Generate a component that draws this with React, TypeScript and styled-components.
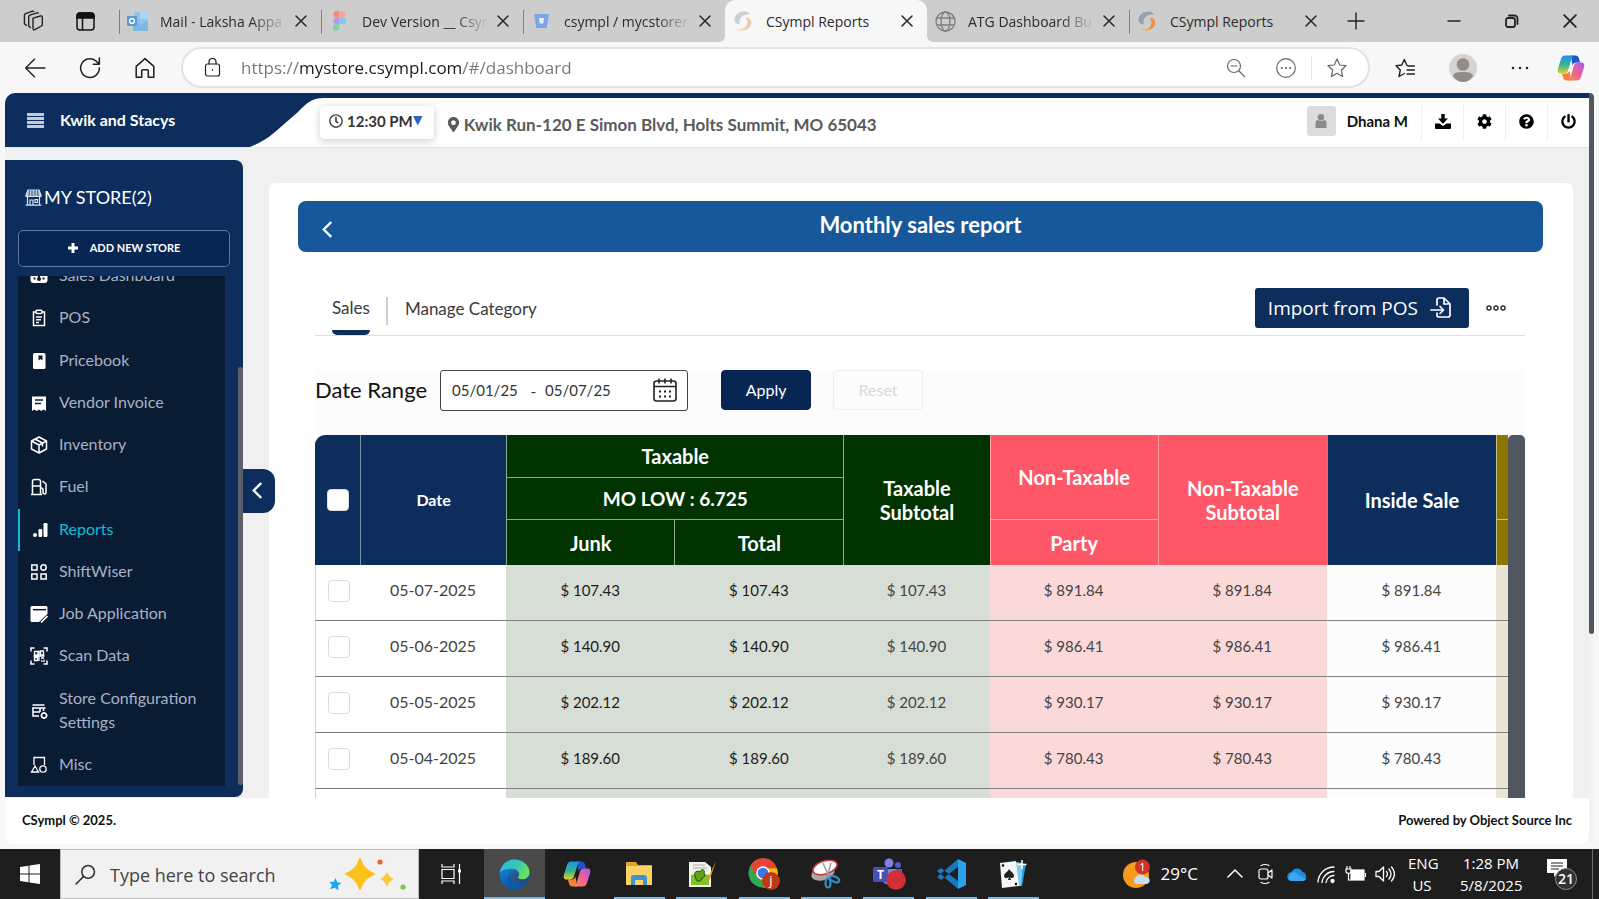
import React, { useState } from "react";
import styled, { createGlobalStyle, css } from "styled-components";
import {
  FaCog,
  FaMapMarkerAlt,
  FaPowerOff,
  FaQuestionCircle,
  FaRegClock,
} from "react-icons/fa";

const ui = `"Open Sans", "Noto Sans", sans-serif`;
const brand = `Lato, "Open Sans", sans-serif`;
const navy = "#0d2d5c";

const GlobalStyle = createGlobalStyle`
  *, *::before, *::after { box-sizing: border-box; }
  html, body { margin: 0; height: 100%; overflow: hidden; }
  body { background: #f7f7f7; font-family: ${brand}; font-size: 16px; color: #222; }
  button, input { font: inherit; color: inherit; margin: 0; }
  button { background: none; border: 0; padding: 0; cursor: pointer; }
  a { color: inherit; text-decoration: none; }
  svg { display: block; flex: none; }
`;

const Screen = styled.div`
  display: flex;
  flex-direction: column;
  height: 100vh;
`;

/* ---------- browser chrome ---------- */

const TabStrip = styled.div`
  display: flex;
  align-items: stretch;
  height: 42px;
  background: #cdcdcd;
  font-family: ${ui};
`;

const StripTools = styled.div`
  display: flex;
  align-items: center;
  gap: 32px;
  width: 119px;
  padding-left: 22px;
`;

const TabItem = styled.div<{ $active?: boolean; $line?: boolean }>`
  position: relative;
  display: flex;
  align-items: center;
  flex: 0 1 202px;
  min-width: 0;
  padding: 0 14px 0 8px;
  font-size: 14px;
  color: #2b2b2b;
  ${(p) =>
    p.$line &&
    css`
      &::before {
        content: "";
        position: absolute;
        left: 0;
        top: 10px;
        width: 1px;
        height: 24px;
        background: #808080;
      }
    `}
  ${(p) =>
    p.$active &&
    css`
      background: #f7f7f7;
      border-radius: 10px 10px 0 0;
      z-index: 1;
      &::before,
      &::after {
        content: "";
        position: absolute;
        bottom: 0;
        width: 6px;
        height: 6px;
      }
      &::before {
        left: -6px;
        background: radial-gradient(circle at 0 0, #cdcdcd 6px, #f7f7f7 6px);
      }
      &::after {
        right: -6px;
        background: radial-gradient(circle at 100% 0, #cdcdcd 6px, #f7f7f7 6px);
      }
    `}
`;

const TabTitle = styled.span<{ $fade?: boolean }>`
  flex: 1;
  min-width: 0;
  margin: 0 8px 0 12px;
  white-space: nowrap;
  ${(p) =>
    p.$fade &&
    css`
      mask-image: linear-gradient(90deg, #000 calc(100% - 36px), transparent);
    `}
`;

const StripEnd = styled.div`
  display: flex;
  align-items: center;
  justify-content: space-between;
  flex: 1;
  padding: 0 22px 0 16px;
`;

const WindowButtons = styled.div`
  display: flex;
  align-items: center;
  gap: 44px;
`;

const Toolbar = styled.div`
  display: flex;
  align-items: center;
  height: 51px;
  padding: 0 14px 0 24px;
  background: #f7f7f7;
  font-family: ${ui};
`;

const NavButtons = styled.div`
  display: flex;
  align-items: center;
  gap: 33px;
  width: 157px;
`;

const AddressBar = styled.div`
  display: flex;
  align-items: center;
  flex: 1;
  height: 41px;
  padding: 0 21px 0 20px;
  border: 2px solid #e2e2e2;
  border-radius: 21px;
  background: #fff;
`;

const UrlInput = styled.input`
  flex: 1;
  min-width: 0;
  margin-left: 18px;
  border: 0;
  outline: 0;
  padding: 0;
  font-size: 17px;
  background: linear-gradient(90deg, #767676 0 59px, #1b1b1b 59px 222px, #767676 222px);
  -webkit-background-clip: text;
  background-clip: text;
  -webkit-text-fill-color: transparent;
`;

const AddressIcons = styled.div`
  display: flex;
  align-items: center;
  gap: 30px;
  color: #666;
`;

const StarSlot = styled.div`
  display: flex;
  align-items: center;
  height: 24px;
  padding-left: 15px;
  margin-left: -15px;
  border-left: 1px solid #e4e4e4;
`;

const ToolbarEnd = styled.div`
  display: flex;
  align-items: center;
  gap: 34px;
  padding-left: 25px;
`;

const CopilotButton = styled.button`
  margin-left: -6px;
`;

/* ---------- page frame ---------- */

const Viewport = styled.div`
  display: flex;
  flex: 1;
  min-height: 0;
  padding: 0 5px 5px;
`;

const Page = styled.div`
  display: flex;
  flex-direction: column;
  flex: 1;
  min-width: 0;
  overflow: hidden;
  border-radius: 10px 0 8px 8px;
  background: #f0f0f0;
`;

const ScrollTrack = styled.div`
  width: 5px;
  background: #f3f3f3;
  border-radius: 0 8px 8px 0;
`;

const ScrollThumb = styled.div`
  height: 72%;
  border-radius: 0 5px 3px 3px;
  background: #515761;
`;

const Header = styled.header`
  display: flex;
  flex: none;
  height: 55px;
  border-top: 5px solid ${navy};
  border-bottom: 1px solid #e2e2e2;
  background: #fff;
`;

const BrandBlock = styled.div`
  display: flex;
  align-items: center;
  gap: 16px;
  width: 319px;
  padding: 0 0 7px 22px;
  background: ${navy};
  clip-path: path("M0 0H319C306 0 301 6 293 14L270 34C260 43 250 47 240 51H0Z");
  color: #fff;
  font-weight: 700;
  font-size: 16px;
`;

const BurgerButton = styled.button`
  padding-top: 2px;
  color: #c5cbd8;
`;

const TimeButton = styled.button`
  display: flex;
  align-items: center;
  align-self: flex-start;
  gap: 4px;
  height: 33px;
  margin: 8px 16px 0 -4px;
  padding: 0 11px 4px 9px;
  border-radius: 4px;
  background: #fff;
  box-shadow: 0 2px 8px rgba(0, 0, 0, 0.2);
  font-weight: 700;
  font-size: 15px;
  color: #333;
`;

const Caret = styled.span`
  width: 10px;
  height: 10px;
  margin-left: -4px;
  background: #2a66b8;
  clip-path: polygon(0 0, 100% 0, 50% 100%);
`;

const Address = styled.div`
  display: flex;
  align-items: center;
  gap: 3px;
  flex: 1;
  margin-left: -4px;
  padding-top: 3px;
  font-weight: 700;
  font-size: 17px;
  color: #5a5a5a;
`;

const UserBlock = styled.div`
  display: flex;
  align-items: center;
  gap: 11px;
  padding: 0 13px 3px 0;
  font-weight: 700;
  font-size: 15px;
  color: #111;
`;

const Avatar = styled.div`
  display: grid;
  place-items: center;
  width: 29px;
  height: 30px;
  border-radius: 3px;
  background: #dcdcdc;
`;

const HeaderAction = styled.button`
  display: grid;
  place-items: center;
  align-self: center;
  width: 42px;
  height: 36px;
  padding-bottom: 3px;
  border-left: 1px solid #efefef;
  color: #000;
`;

const Body = styled.div`
  display: flex;
  flex: 1;
  min-height: 0;
`;

/* ---------- sidebar ---------- */

const Sidebar = styled.aside`
  position: relative;
  display: flex;
  flex-direction: column;
  flex: none;
  width: 238px;
  margin-top: 12px;
  margin-bottom: 1px;
  padding: 24px 13px 11px;
  border-radius: 0 8px 8px 0;
  background: ${navy};
`;

const StoreTitle = styled.h2`
  display: flex;
  align-items: center;
  gap: 2px;
  margin: 0 0 20px;
  padding-left: 7px;
  font-size: 18px;
  line-height: 26px;
  font-weight: 400;
  color: #fff;
`;

const AddStore = styled.button`
  display: flex;
  align-items: center;
  justify-content: center;
  gap: 12px;
  flex: none;
  height: 37px;
  padding-bottom: 2px;
  border: 1px solid #5f7ba5;
  border-radius: 5px;
  background: #072654;
  color: #fff;
  font-size: 11px;
  font-weight: 700;
`;

const MenuClip = styled.nav`
  display: flex;
  flex-direction: column;
  justify-content: flex-end;
  flex: 1;
  min-height: 0;
  margin-top: 9px;
  margin-right: 5px;
  overflow: hidden;
  background: #0a1b34;
`;

const MenuList = styled.ul`
  display: flex;
  flex-direction: column;
  justify-content: space-between;
  flex: none;
  height: 531px;
  margin: 0;
  padding: 0;
  list-style: none;
`;

const MenuLink = styled.a<{ $active?: boolean }>`
  display: flex;
  align-items: center;
  gap: 11px;
  min-height: 42px;
  padding: 8px 20px 10px 12px;
  box-shadow: ${(p) => (p.$active ? "inset 2px 0 0 #12bcd9" : "none")};
  color: ${(p) => (p.$active ? "#12bcd9" : "#a7b3c6")};
  font-size: 16px;
  line-height: 24px;

  svg {
    color: #fff;
    margin-top: 2px;
  }
`;

const SideThumb = styled.div`
  position: absolute;
  right: 0;
  top: 207px;
  bottom: 12px;
  width: 5px;
  border-radius: 2px;
  background: #5a5f69;
`;

const CollapseButton = styled.button`
  position: absolute;
  left: 100%;
  top: 309px;
  z-index: 2;
  display: grid;
  place-items: center;
  width: 32px;
  height: 44px;
  padding: 0 5px 2px 0;
  border-radius: 0 12px 12px 0;
  background: ${navy};
  color: #fff;
`;

/* ---------- report ---------- */

const Panel = styled.main`
  display: flex;
  flex-direction: column;
  flex: 1;
  min-width: 0;
  margin: 35px 16px 0 26px;
  padding: 18px 30px 0 29px;
  overflow: hidden;
  border-radius: 6px 6px 0 0;
  background: #fff;
`;

const Banner = styled.div`
  display: flex;
  align-items: center;
  flex: none;
  height: 51px;
  padding: 0 20px 0 23px;
  border-radius: 8px;
  background: #165899;
  color: #fff;
`;

const BackButton = styled.button`
  padding-top: 5px;
`;

const BannerTitle = styled.h1`
  flex: 1;
  margin: 0;
  padding: 0 15px 4px 0;
  text-align: center;
  font-size: 22px;
  font-weight: 700;
`;

const Section = styled.div`
  display: flex;
  flex-direction: column;
  flex: 1;
  min-height: 0;
  margin: 36px 18px 0 17px;
`;

const TabsRow = styled.div`
  display: flex;
  flex: none;
  height: 48px;
  padding: 0 19px 0 17px;
  border-bottom: 1px solid #dedede;
`;

const ReportTab = styled.button<{ $active?: boolean }>`
  height: 47px;
  padding-bottom: 6px;
  font-size: 17px;
  color: #3a3a3a;
  ${(p) =>
    p.$active &&
    css`
      padding-bottom: 3px;
      border-bottom: 5px solid ${navy};
      border-radius: 0 0 5px 5px;
    `}
`;

const TabDivider = styled.span`
  width: 2px;
  height: 28px;
  margin: 9px 17px 0 16px;
  background: #cfcfcf;
`;

const ImportButton = styled.button`
  display: flex;
  align-items: center;
  gap: 12px;
  height: 40px;
  margin-left: auto;
  padding: 0 17px 0 13px;
  border-radius: 3px;
  background: ${navy};
  color: #fff;
  font-size: 19px;
  font-family: ${ui};
`;

const MoreButton = styled.button`
  align-self: flex-start;
  height: 40px;
  margin-left: 17px;
`;

const Filters = styled.form`
  display: flex;
  align-items: center;
  flex: none;
  height: 65px;
  margin: 34px 0 0;
  padding-bottom: 25px;
  background: #fcfcfc;
`;

const RangeLabel = styled.label`
  margin-right: 13px;
  padding-bottom: 2px;
  font-size: 22px;
  color: #111;
`;

const RangeBox = styled.div`
  display: flex;
  align-items: center;
  width: 248px;
  height: 41px;
  padding: 0 10px 0 11px;
  border: 1px solid #444;
  border-radius: 3px;
  background: #fff;
  color: #333;
`;

const DateInput = styled.input`
  width: 70px;
  padding: 0;
  border: 0;
  outline: 0;
  background: transparent;
  font-size: 15px;
`;

const Dash = styled.span`
  width: 23px;
  text-align: center;
`;

const CalendarButton = styled.button`
  margin-left: auto;
  color: #222;
`;

const FormButton = styled.button<{ $primary?: boolean }>`
  width: 90px;
  height: 40px;
  margin-left: ${(p) => (p.$primary ? "33px" : "22px")};
  padding-bottom: 2px;
  border: 1px solid ${(p) => (p.$primary ? "#072654" : "#ededed")};
  border-radius: 4px;
  background: ${(p) => (p.$primary ? "#072654" : "#fcfcfc")};
  color: ${(p) => (p.$primary ? "#fff" : "#d9d9d9")};
`;

const TableArea = styled.div`
  display: flex;
  flex: 1;
  min-height: 0;
`;

const TableClip = styled.div`
  flex: 1;
  min-width: 0;
  overflow: hidden;
  border-radius: 10px 0 0 0;
`;

const TableThumb = styled.div`
  width: 17px;
  border-radius: 5px 5px 0 0;
  background: #515761;
`;

const Table = styled.table`
  width: 100%;
  table-layout: fixed;
  border-collapse: separate;
  border-spacing: 0;
`;

type Tone = "navy" | "green" | "red" | "gold";
const headTone: Record<Tone, string> = {
  navy,
  green: "#003300",
  red: "#ff5768",
  gold: "#8a7600",
};
const headLine: Record<Tone, string> = {
  navy: "#7f93ad",
  green: "#8fa68f",
  red: "#ffa0a9",
  gold: "#c9bf80",
};

const HeadCell = styled.th<{ $tone: Tone; $top?: boolean; $size?: number }>`
  padding: 0;
  border-left: 1px solid ${(p) => headLine[p.$tone]};
  border-top: ${(p) => (p.$top ? `1px solid ${headLine[p.$tone]}` : "0")};
  background: ${(p) => headTone[p.$tone]};
  color: #fff;
  font-size: ${(p) => p.$size ?? 20}px;
  line-height: 24px;
  font-weight: 700;
  text-align: center;
  vertical-align: middle;

  &:first-child[rowspan="3"] {
    border-left-color: ${(p) => headTone[p.$tone]};
  }
`;

const HeadRow = styled.tr<{ $last?: boolean }>`
  height: ${(p) => (p.$last ? "46px" : "42px")};
`;

const BodyRow = styled.tr`
  height: 56px;
`;

const Cell = styled.td<{ $bg: string; $soft?: boolean; $money?: boolean }>`
  padding: 0 0 6px;
  border-bottom: 1px solid #7d807d;
  background: ${(p) => p.$bg};
  color: ${(p) => (p.$soft ? "#444" : "#1c1c1c")};
  font-size: ${(p) => (p.$money ? "15px" : "16px")};
  text-align: center;

  &:first-child {
    border-left: 1px solid #cfcfcf;
  }
`;

const Check = styled.input<{ $head?: boolean }>`
  appearance: none;
  display: block;
  width: 22px;
  height: 22px;
  margin: ${(p) => (p.$head ? "0 auto" : "2px 0 0 12px")};
  border: 1px solid #dcdcdc;
  border-radius: 4px;
  background: #fff;
`;

const Footer = styled.footer`
  display: flex;
  align-items: center;
  justify-content: space-between;
  flex: none;
  height: 46px;
  padding: 0 17px 2px;
  background: #fff;
  color: #111;
  font-size: 13px;
  font-weight: 700;
`;

/* ---------- taskbar ---------- */

const Taskbar = styled.div`
  display: flex;
  flex: none;
  height: 50px;
  background: #1f1e1f;
  color: #fff;
  font-family: ${ui};
`;

const StartButton = styled.button`
  display: grid;
  place-items: center;
  width: 60px;
`;

const SearchBox = styled.div`
  display: flex;
  align-items: center;
  gap: 14px;
  width: 359px;
  padding: 1px 11px 0 14px;
  border: 1px solid #bdbdbd;
  background: #f1f1f1;
  color: #333;
`;

const SearchInput = styled.input`
  flex: 1;
  min-width: 0;
  border: 0;
  padding: 0;
  outline: 0;
  background: none;
  font-size: 18px;
  &::placeholder {
    color: #444;
    opacity: 1;
  }
`;

const TaskButton = styled.button`
  display: grid;
  place-items: center;
  width: 65px;
`;

const AppList = styled.div`
  display: flex;
  justify-content: space-between;
  width: 560px;
`;

const AppButton = styled.button<{ $open?: boolean; $current?: boolean }>`
  position: relative;
  display: grid;
  place-items: center;
  width: 61px;
  background: ${(p) => (p.$current ? "#4a4a4a" : "none")};
  ${(p) =>
    p.$open &&
    css`
      &::after {
        content: "";
        position: absolute;
        left: ${p.$current ? "0" : "5px"};
        right: ${p.$current ? "0" : "5px"};
        bottom: 0;
        height: 2px;
        background: #76b9ed;
      }
    `}
`;

const Tray = styled.div`
  display: flex;
  align-items: center;
  margin-left: auto;
  padding-right: 6px;
  font-size: 15px;
  line-height: 22px;
  text-align: center;
`;

const Weather = styled.button`
  display: flex;
  align-items: center;
  gap: 10px;
  margin-right: 29px;
  color: #fff;
  font-size: 17px;
`;

const TrayIcons = styled.div`
  display: flex;
  align-items: center;
  gap: 9px;
  margin-right: 13px;
`;

const Stack = styled.div<{ $w: number }>`
  width: ${(p) => p.$w}px;
  margin-right: 24px;
  white-space: nowrap;
`;

const Notice = styled.button`
  padding-right: 14px;
  border-right: 1px solid #6a6a6a;
  height: 50px;
`;

/* ---------- icons ---------- */

type LineProps = { size?: number; w?: number; children: React.ReactNode; box?: number };
const Line = ({ size = 20, w = 1.5, box = 20, children }: LineProps) => (
  <svg width={size} height={size} viewBox={`0 0 ${box} ${box}`} fill="none" stroke="currentColor" strokeWidth={w} strokeLinecap="round" strokeLinejoin="round">
    {children}
  </svg>
);

const CloseIcon = ({ size = 12, w = 1.6 }) => (
  <Line size={size} box={12} w={w}><path d="M1 1l10 10M11 1L1 11" /></Line>
);

const WorkspacesIcon = () => (
  <Line size={22} box={22} w={1.4}>
    <path d="M11 8.200l7.500-2.200q1.800-.4 1.800 1.400v7.200q0 1-.9 1.400l-6.500 3.600q-1.900.8-1.900-1z" />
    <path d="M8.500 17.500l-1-.6q-.8-.5-.8-1.400V6.800q0-1.200 1.200-1.700L15 2.800q.8-.2 1.200.3M4.500 15.300l-1.200-.8q-.9-.6-.9-1.600V5.200q0-1.200 1.200-1.600L10.500 1.200q.9-.2 1.300.3" />
  </Line>
);

const TabActionsIcon = () => (
  <svg width="19" height="19" viewBox="0 0 19 19" fill="none" stroke="#111" strokeWidth="1.5">
    <rect x="1" y="1" width="17" height="17" rx="3" />
    <path d="M1 4a3 3 0 0 1 3-3h11a3 3 0 0 1 3 3v2H1z" fill="#111" />
    <path d="M6.500 6v12" />
  </svg>
);

const OutlookIcon = () => (
  <svg width="21" height="21" viewBox="0 0 21 21">
    <rect x="7" y="1" width="13" height="15" rx="1" fill="#8fc3ea" />
    <path d="M13 1h7v7h-7z" fill="#a9d4f2" />
    <path d="M6 9l8 5 7-5v10a1 1 0 0 1-1 1H7a1 1 0 0 1-1-1z" fill="#7db7e4" />
    <rect x="0" y="5" width="10" height="10" rx="1" fill="#5b9ad4" />
    <circle cx="5" cy="10" r="2.400" fill="none" stroke="#fff" strokeWidth="1.400" />
  </svg>
);

const FigmaIcon = () => (
  <svg width="21" height="20" viewBox="0 0 21 20">
    <path d="M10.500 0H7.800a3.300 3.300 0 0 0 0 6.600h2.700z" fill="#f08c75" />
    <path d="M10.500 0h2.700a3.300 3.300 0 0 1 0 6.600h-2.700z" fill="#f7a397" />
    <path d="M10.500 6.600H7.800a3.300 3.300 0 0 0 0 6.600h2.700z" fill="#b797ee" />
    <circle cx="13.500" cy="9.900" r="3.300" fill="#7fc8f2" />
    <path d="M10.500 13.200H7.800a3.300 3.300 0 1 0 2.700 3.300z" fill="#7bd3a8" />
  </svg>
);

const BucketIcon = () => (
  <svg width="21" height="16" viewBox="0 0 21 16">
    <path d="M3 1h15l-2.300 14H5.300z" fill="#7ea6e6" />
    <path d="M8 5h5l-.8 5.500H8.800z" fill="#e7effb" />
  </svg>
);

const CsymplIcon = ({ faded = false }) => (
  <svg width="21" height="21" viewBox="0 0 21 21" opacity={faded ? 0.45 : 1}>
    <path d="M1.500 9C1.500 4 6 .5 11 .5c3 0 5 1 6 3.500-3-1-6.500 0-8.500 2s-2.500 4-1.500 7.500C4 13 1.500 12 1.500 9z" fill="#93a2ae" />
    <path d="M12.500 6.500c4.500 0 6.500 3 5.500 6.500-1 4.500-5 7-11 6.500 3.500-1 6-2.500 7-5.500 1-2.500.5-5-1.500-7.500z" fill="#ee8f45" />
    <path d="M3 18c5 .5 8-.5 10.500-4-.5 4.500-5 7-10.500 4z" fill="#f7c33c" />
  </svg>
);

const GlobeIcon = () => (
  <svg width="21" height="21" viewBox="0 0 21 21" fill="none" stroke="#7d7d7d" strokeWidth="1.3">
    <circle cx="10.500" cy="10.500" r="9.500" />
    <ellipse cx="10.500" cy="10.500" rx="4.500" ry="9.500" />
    <path d="M2 7h17M2 14h17" />
  </svg>
);

const CopilotIcon = ({ size = 28 }) => (
  <svg width={size} height={size} viewBox="0 0 28 28">
    <defs>
      <linearGradient id="cpa" x1="0" y1="0" x2="0" y2="1">
        <stop offset="0" stopColor="#1b93ec" /><stop offset=".55" stopColor="#3bb68a" /><stop offset="1" stopColor="#e8cf2a" />
      </linearGradient>
      <linearGradient id="cpb" x1="1" y1="0" x2="0" y2="1">
        <stop offset="0" stopColor="#a45cec" /><stop offset=".5" stopColor="#ee6098" /><stop offset="1" stopColor="#f98f4a" />
      </linearGradient>
    </defs>
    <path d="M14 1.500h4.500c2 0 2.800.9 3.300 2.500l1.400 4.500h-3.800c-2 0-3.200.8-3.900 3z" fill="#1a55cf" />
    <path d="M14 26.500H9.500c-2 0-2.800-.9-3.300-2.500l-1.400-4.500h3.800c2 0 3.200-.8 3.900-3z" fill="#f4813c" />
    <path d="M8.500 1.500H17c-1.200.3-1.800 1.300-2.200 2.600L11 16.500c-.8 2.300-2 3-4 3H3.800C1 19.500.2 17.500.9 15L4 5c.8-2.400 2-3.500 4.500-3.500z" fill="url(#cpa)" />
    <path d="M19.500 26.500H11c1.200-.3 1.800-1.300 2.200-2.600L17 11.500c.8-2.300 2-3 4-3h3.200c2.800 0 3.600 2 2.900 4.500L24 23c-.8 2.400-2 3.500-4.500 3.500z" fill="url(#cpb)" />
  </svg>
);

const StoreIcon = () => (
  <svg width="17" height="17" viewBox="0 0 17 17" fill="none" stroke="#dbe3ef" strokeWidth="1.2">
    <path d="M3 1h11l2 5v1.500H1V6z" fill="#b9c6da" />
    <path d="M4.500 1L4 7M7 1v6M10 1v6M12.500 1L13 7" stroke={navy} strokeWidth=".7" />
    <path d="M2.500 8v8M14.500 8v8M.5 16.200h16M5 16v-5h3v5M10 10.500h2.500v3H10z" />
  </svg>
);

const PlusIcon = () => (
  <svg width="10" height="10" viewBox="0 0 10 10" stroke="#fff" strokeWidth="3"><path d="M5 0v10M0 5h10" /></svg>
);

const MenuIcon = ({ name }: { name: string }) => {
  const s = { width: 18, height: 18, viewBox: "0 0 18 18", fill: "none", stroke: "currentColor", strokeWidth: 1.5 } as const;
  switch (name) {
    case "Sales Dashboard":
      return <svg {...s}><rect x=".5" y="2" width="17" height="14" rx="3" fill="#fff" stroke="none" /><path d="M9 13V7M3.500 11.500h2M12.500 11.500h2" stroke="#0a1b34" strokeWidth="2" /><circle cx="9" cy="12" r="2" fill="#0a1b34" stroke="none" /></svg>;
    case "POS":
      return <svg {...s}><path d="M6 3H3.500v13.500h11V3H12" /><rect x="6" y="1.200" width="6" height="3.400" rx="1" /><path d="M6 8h6M6 10.700h5M6 13.400h3" /></svg>;
    case "Pricebook":
      return <svg {...s} stroke="none"><rect x="3" y="1" width="12.500" height="16" rx="1.500" fill="#fff" /><path d="M8.500 3.500h4v5l-2-1.500-2 1.500z" fill="#0a1b34" /></svg>;
    case "Vendor Invoice":
      return <svg {...s} stroke="none"><path d="M2 2.500h14V17l-2.300-1.500L11.300 17 9 15.500 6.700 17l-2.400-1.500L2 17z" fill="#fff" /><path d="M5 6h8M5 9.500h6" stroke="#0a1b34" strokeWidth="1.5" /></svg>;
    case "Inventory":
      return <svg {...s} strokeLinejoin="round"><path d="M9 1l7.500 4v8L9 17l-7.500-4V5zM1.500 5L9 9l7.500-4M9 9v8M5 3l7.500 4v3.500" /></svg>;
    case "Fuel":
      return <svg {...s}><path d="M2.500 16.500v-13q0-2 2-2h4q2 0 2 2v13zM2.500 8h8M12.500 3l3.500 3v8q0 2-1.500 2t-1.500-2v-3l-2-1.500M1 16.500h11" /></svg>;
    case "Reports":
      return <svg {...s} stroke="none" fill="#fff"><circle cx="5" cy="14" r="2" /><rect x="8.500" y="8" width="3.700" height="8" rx="1.200" /><rect x="13.500" y="2" width="4" height="14" rx="1.200" /></svg>;
    case "ShiftWiser":
      return <svg {...s}><rect x="1.800" y="2" width="5.200" height="5" /><circle cx="13.500" cy="4.500" r="2.700" /><rect x="1.800" y="11" width="5.200" height="5" /><rect x="11" y="11" width="5.200" height="5" /></svg>;
    case "Job Application":
      return <svg {...s} stroke="none"><path d="M.5 2.500q0-1.500 1.500-1.500h14q1.500 0 1.500 1.500V10l-7 7H2Q.5 17 .5 15.500z" fill="#fff" /><path d="M3 4.700h13" stroke="#0a1b34" /><path d="M9.500 17.500L18 9.500M12.500 18L18 13" stroke="#0a1b34" strokeWidth="1.4" /><path d="M11 17.500l6.500-6.500" stroke="#fff" strokeWidth="1.6" /></svg>;
    case "Scan Data":
      return <svg {...s}><path d="M1 4.500V1h3.500M13.500 1H17v3.500M17 13.500V17h-3.500M4.500 17H1v-3.500" /><path d="M4.500 4.500h3.500v3.500H4.500zM10.500 4h3v4h-3zM4.500 10.500h3v3h-3zM3.500 9h11M9 3.500V14M11 11h3M11 14h1.500M14 12.500V15" strokeWidth="1.3" /></svg>;
    case "Store Configuration Settings":
      return <svg {...s}><path d="M2.500 3h12M2 6h13.500M3 6v8h6M3 10h7M13.500 6v3M10 6v4" /><circle cx="14" cy="13.500" r="2.500" /><path d="M14 10v1M14 16v1M10.800 13.500h.7M16.500 13.500h1" /></svg>;
    default:
      return <svg {...s} strokeWidth={1.3}><path d="M4 9V1.500h10.500V9M5 10l3.500 6h-7z" /><circle cx="13" cy="13" r="3.200" /></svg>;
  }
};

const UserIcon = () => (
  <svg width="12" height="14" viewBox="0 0 12 14" fill="#8a8a8a"><circle cx="6" cy="3.300" r="3.200" /><path d="M.5 14V9q0-3 2.500-3 3 2 6 0 2.500 0 2.500 3v5z" /></svg>
);

const DownloadIcon = () => (
  <svg width="16" height="15" viewBox="0 0 16 15">
    <path d="M6.300 0h3.400v4.500H13L8 9.700 3 4.500h3.300z" />
    <path d="M0 9.500h4.500L8 12l3.500-2.500H16V14q0 1-1 1H1q-1 0-1-1z" />
  </svg>
);

const ImportIcon = () => (
  <Line size={22} box={22} w={1.7}>
    <path d="M7 8V3q0-2 2-2h5l6 6v11q0 2-2 2H9q-2 0-2-2v-2M14 1v6h6M1 13h12M10 9.500l3.500 3.500L10 16.500" />
  </Line>
);

const CalendarIcon = () => (
  <svg width="24" height="24" viewBox="0 0 24 24" fill="none" stroke="currentColor" strokeWidth="1.6">
    <rect x="1" y="3" width="22" height="20" rx="2.500" />
    <path d="M1 8.500h22M6 .5v5M12 .5v5M18 .5v5" />
    <path d="M6 13.500h2M11 13.500h2M16 13.500h2M6 18.500h2M11 18.500h2M16 18.500h2" strokeWidth="2.2" />
  </svg>
);

const ChevronLeft = ({ size = 16 }) => (
  <svg width={size * 0.7} height={size} viewBox="0 0 11 16" fill="none" stroke="#fff" strokeWidth="2.2"><path d="M9.500 1L2.500 8l7 7" /></svg>
);

/* ---------- taskbar drawings ---------- */

const EdgeIcon = () => (
  <svg width="31" height="31" viewBox="0 0 32 32">
    <defs>
      <linearGradient id="eg" x1="0" y1="0" x2="1" y2=".5"><stop offset="0" stopColor="#2fb4e9" /><stop offset=".6" stopColor="#35c9b2" /><stop offset="1" stopColor="#6fe05a" /></linearGradient>
      <linearGradient id="eb" x1="0" y1="0" x2=".6" y2="1"><stop offset="0" stopColor="#1c8ee0" /><stop offset="1" stopColor="#0b4d9c" /></linearGradient>
    </defs>
    <circle cx="16" cy="16" r="15.500" fill="url(#eb)" />
    <path d="M1 14C2 6 8 .5 16 .5S31.500 6 31.500 14c0 4-3 7-7.500 7-4 0-5-1.500-4-3 2-3 0-8-7-8C7 10 2 12 1 14z" fill="url(#eg)" />
    <path d="M12 14c-2 7 3 14 11 13 3 0 5-2 6-3-3 5-8 7.500-13 7.500C9 31 6 22 12 14z" fill="#0f5aa8" />
    <path d="M20 18c2-3 0-6-3-6s-6 3-5 7c1 5 7 8 17 4l2-4q-3 3-8 2-4-1-3-3z" fill="#4a4a4a" opacity=".45" />
  </svg>
);

const ExplorerIcon = () => (
  <svg width="28" height="24" viewBox="0 0 28 24">
    <path d="M1 0h10l2 3h14v19H1z" fill="#e0a526" /><path d="M1 4h26v19H1z" fill="#fbd263" />
    <path d="M6 23v-7q0-3 3-3h10q3 0 3 3v7h-4v-5h-8v5z" fill="#3b93d3" />
  </svg>
);

const NotepadIcon = () => (
  <svg width="28" height="28" viewBox="0 0 28 28">
    <path d="M1 2h16l6 5v20H1z" fill="#f3f3ee" /><path d="M3 15q9-3 18 0v10H3z" fill="#7fc421" />
    <path d="M7 16c-2-4 3-6 5-4 1-4 6-2 4 1 2 2 0 5-2 5 0 4-6 4-6 1z" fill="#5fa31c" stroke="#24480c" strokeWidth="1" />
    <path d="M28 1L20 18l-1 4 3-3z" fill="#d99a2a" /><path d="M5 5h12M5 8h14" stroke="#aaa" />
  </svg>
);

const ChromeIcon = () => (
  <svg width="33" height="32" viewBox="0 0 33 32">
    <circle cx="15" cy="15" r="14.500" fill="#33a852" />
    <path d="M2.500 7.700A14.500 14.500 0 0 1 29 10.500H15z" fill="#ea4335" /><path d="M2.500 7.700L9 19l6-9z" fill="#ea4335" />
    <path d="M29 10.500A14.500 14.500 0 0 1 15 29.500l7-12-3-7z" fill="#fbbc05" />
    <circle cx="15" cy="15" r="6.800" fill="#fff" /><circle cx="15" cy="15" r="5.300" fill="#3b78e7" />
    <circle cx="23" cy="23" r="9" fill="#bf3811" />
    <text x="23" y="27" textAnchor="middle" fill="#fff" fontSize="13" fontFamily="Open Sans">j</text>
  </svg>
);

const SnipIcon = () => (
  <svg width="30" height="30" viewBox="0 0 30 30">
    <ellipse cx="12" cy="14" rx="12" ry="7" fill="#a8a8a8" transform="rotate(-18 12 14)" />
    <ellipse cx="14" cy="8.500" rx="12.500" ry="6.500" fill="#fff" stroke="#c7353b" strokeWidth="1.5" transform="rotate(-18 14 8.500)" />
    <path d="M12 4l6 14M20 4l-4 14" stroke="#9a9a9a" strokeWidth="1.5" />
    <ellipse cx="17" cy="24" rx="2.500" ry="4.500" fill="none" stroke="#2f8ec6" strokeWidth="2.2" />
    <ellipse cx="23.500" cy="20" rx="5" ry="2.600" fill="none" stroke="#2f8ec6" strokeWidth="2.2" transform="rotate(25 23 20)" />
  </svg>
);

const TeamsIcon = () => (
  <svg width="34" height="32" viewBox="0 0 34 32">
    <circle cx="17" cy="5" r="4.500" fill="#7b83eb" /><circle cx="26" cy="7" r="3" fill="#5059c9" />
    <path d="M20 11h10v10q-5 6-10 0z" fill="#5059c9" /><path d="M9 11h15v12q-7 7-13 1z" fill="#7b83eb" />
    <rect x="1" y="9" width="15" height="15" rx="1.500" fill="#4550b8" />
    <text x="8.500" y="21" textAnchor="middle" fill="#fff" fontSize="12" fontWeight="700" fontFamily="Open Sans">T</text>
    <circle cx="24" cy="22" r="9.800" fill="#d23038" />
  </svg>
);

const CodeIcon = () => (
  <svg width="31" height="32" viewBox="0 0 31 32">
    <path d="M22 1l8 4v22l-8 4z" fill="#2ba2ea" />
    <path d="M22 1v8L5 22l-4-3zM22 31v-8L5 10l-4 3z" fill="#1679c2" />
  </svg>
);

const CardsIcon = () => (
  <svg width="29" height="30" viewBox="0 0 29 30">
    <path d="M16 3l11 2-4 22-10-1z" fill="#2a9fd8" /><path d="M13 3l11 1-2 23-10-1z" fill="#79cdf0" />
    <path d="M1 4l16-2 3 25-17 2z" fill="#f7f7f7" />
    <path d="M10 10c2 3 5 4 5 7 0 2-3 3-4 1l1 3H9l1-3c-2 2-5 1-5-1 0-3 4-4 5-7z" fill="#222" />
    <circle cx="4" cy="6.500" r="1.200" /><circle cx="17" cy="25" r="1.200" />
    <path d="M23 1v9M18.500 5.500h9" stroke="#fff" strokeWidth="1.5" />
  </svg>
);

const SparkIcon = () => (
  <svg width="78" height="34" viewBox="0 0 78 34">
    <path d="M31 1q3 11 14 15-11 4-14 15-3-11-14-15 11-4 14-15z" fill="#fbc21b" stroke="#fbc21b" strokeWidth="2" strokeLinejoin="round" />
    <path d="M58 14q2 5 7 7-5 2-7 8-2-6-7-8 5-2 7-7z" fill="#fbc93c" />
    <path d="M6.500 20l1.800 4.200 4.400.800-3.700 2.600.4 4.600-3.800-2.400-4.300 1.500 1.600-4.200L.5 24l4.400-.3z" fill="#1ba7ea" />
    <circle cx="51" cy="4" r="2.600" fill="#e8622c" /><circle cx="74" cy="29" r="2.600" fill="#86c440" />
  </svg>
);

const WeatherIcon = () => (
  <svg width="29" height="30" viewBox="0 0 29 30">
    <circle cx="14" cy="16" r="13" fill="#f59b1e" />
    <path d="M14 25a4 4 0 0 1 0-7 5 5 0 0 1 9 0 3.500 3.500 0 0 1 2 7z" fill="#c9dcf6" />
    <circle cx="20.500" cy="8" r="7.500" fill="#cf3227" />
    <text x="20.500" y="12" textAnchor="middle" fill="#fff" fontSize="11" fontFamily="Open Sans">1</text>
  </svg>
);

const NoticeIcon = () => (
  <svg width="32" height="34" viewBox="0 0 32 34">
    <path d="M1 2h20v14H12l-4 4v-4H1z" fill="#fff" />
    <path d="M5 6h12M5 9h12M5 12h8" stroke="#1f1e1f" strokeWidth="1.2" />
    <circle cx="20" cy="22" r="10.500" fill="#333" stroke="#8a8a8a" />
    <text x="20" y="27" textAnchor="middle" fill="#fff" fontSize="14" fontWeight="600" fontFamily="Open Sans">21</text>
  </svg>
);

/* ---------- data ---------- */

const tabs = [
  { title: "Mail - Laksha Appa", icon: <OutlookIcon />, fade: true, line: true },
  { title: "Dev Version __ Csyr", icon: <FigmaIcon />, fade: true, line: true },
  { title: "csympl / mycstorer", icon: <BucketIcon />, fade: true, line: true },
  { title: "CSympl Reports", icon: <CsymplIcon faded />, active: true },
  { title: "ATG Dashboard Bu", icon: <GlobeIcon />, fade: true },
  { title: "CSympl Reports", icon: <CsymplIcon />, line: true },
];

const menu = [
  "Sales Dashboard", "POS", "Pricebook", "Vendor Invoice", "Inventory", "Fuel", "Reports",
  "ShiftWiser", "Job Application", "Scan Data", "Store Configuration Settings", "Misc",
];

const rows = [
  { date: "05-07-2025", tax: "$ 107.43", non: "$ 891.84" },
  { date: "05-06-2025", tax: "$ 140.90", non: "$ 986.41" },
  { date: "05-05-2025", tax: "$ 202.12", non: "$ 930.17" },
  { date: "05-04-2025", tax: "$ 189.60", non: "$ 780.43" },
];

const columns = [45, 146, 168, 169, 146, 168, 169, 169, 12];
const green = "#d7ded6";
const pink = "#fad9d8";

const apps = [
  { name: "Microsoft Edge", icon: <EdgeIcon />, open: true, current: true },
  { name: "Copilot", icon: <CopilotIcon /> },
  { name: "File Explorer", icon: <ExplorerIcon />, open: true },
  { name: "Notepad++", icon: <NotepadIcon />, open: true },
  { name: "Chrome", icon: <ChromeIcon />, open: true },
  { name: "Snipping Tool", icon: <SnipIcon />, open: true },
  { name: "Teams", icon: <TeamsIcon />, open: true },
  { name: "Visual Studio Code", icon: <CodeIcon />, open: true },
  { name: "Solitaire", icon: <CardsIcon />, open: true },
];

/* ---------- sections ---------- */

const BrowserChrome = () => {
  const [url, setUrl] = useState("https://mystore.csympl.com/#/dashboard");
  return (
    <>
      <TabStrip>
        <StripTools>
          <button aria-label="Workspaces"><WorkspacesIcon /></button>
          <button aria-label="Tab actions"><TabActionsIcon /></button>
        </StripTools>
        {tabs.map((t, i) => (
          <TabItem key={i} $active={t.active} $line={t.line}>
            {t.icon}
            <TabTitle $fade={t.fade}>{t.title}</TabTitle>
            <button aria-label="Close tab"><CloseIcon /></button>
          </TabItem>
        ))}
        <StripEnd>
          <button aria-label="New tab"><Line size={18} box={18} w={1.4}><path d="M9 1v16M1 9h16" /></Line></button>
          <WindowButtons>
            <button aria-label="Minimize"><Line size={14} box={14} w={1.6}><path d="M1 7h12" /></Line></button>
            <button aria-label="Restore">
              <Line size={14} box={14} w={1.8}><rect x="1" y="4" width="9" height="9" rx="2" /><path d="M4 1.500h5.500a3 3 0 0 1 3 3V10" /></Line>
            </button>
            <button aria-label="Close window"><CloseIcon size={14} w={1.5} /></button>
          </WindowButtons>
        </StripEnd>
      </TabStrip>
      <Toolbar>
        <NavButtons>
          <button aria-label="Back"><Line size={22} w={1.3}><path d="M19 10H1.500M9.500 2L1.500 10l8 8" /></Line></button>
          <button aria-label="Reload"><Line size={22} w={1.4}><path d="M18.500 10A8.500 8.500 0 1 1 15 3.200L18 6M18.500 1v5.500H13" /></Line></button>
          <button aria-label="Home"><Line size={22} w={1.4}><path d="M2 18.500V8.500L10 1.500l8 7v10h-5v-6q0-1-1-1H8q-1 0-1 1v6z" /></Line></button>
        </NavButtons>
        <AddressBar>
          <Line size={20} w={1.2}><rect x="2.500" y="6" width="14" height="12" rx="2" /><path d="M6 6V4a3.500 3.500 0 0 1 7 0v2M9.500 11.700v.6" /></Line>
          <UrlInput aria-label="Address" spellCheck={false} value={url} onChange={(e) => setUrl(e.target.value)} />
          <AddressIcons>
            <button aria-label="Zoom out"><Line w={1.2}><circle cx="8" cy="8" r="6.500" /><path d="M13 13l5.500 5.500M5 8h6" /></Line></button>
            <button aria-label="More tools"><Line w={1.2}><circle cx="10" cy="10" r="9.300" /><path d="M5.800 10h.01M10 10h.01M14.200 10h.01" strokeWidth="2.2" /></Line></button>
            <StarSlot>
              <button aria-label="Favorite"><Line w={1.2}><path d="M10 1l2.700 6 6.300.700-4.700 4.300 1.300 6.500L10 15.300 4.400 18.500l1.300-6.500L1 7.700 7.300 7z" /></Line></button>
            </StarSlot>
          </AddressIcons>
        </AddressBar>
        <ToolbarEnd>
          <button aria-label="Favorites"><Line w={1.4}><path d="M12 7.500L9.300 1.500 6.800 7 1 7.700l4.300 4.300L4 18.500l5.300-3M13 8h6.500M12 12h7.500M12 16h7.500" /></Line></button>
          <button aria-label="Profile">
            <svg width="28" height="28" viewBox="0 0 28 28"><circle cx="14" cy="14" r="14" fill="#d6d3d1" /><circle cx="14" cy="10.500" r="6.300" fill="#918c88" /><path d="M4 22q0-4 10-4t10 4q-4 6-10 6T4 22z" fill="#918c88" /></svg>
          </button>
          <button aria-label="Settings"><Line size={18} box={18} w={2.6}><path d="M2 9h.01M9 9h.01M16 9h.01" /></Line></button>
          <CopilotButton aria-label="Copilot"><CopilotIcon /></CopilotButton>
        </ToolbarEnd>
      </Toolbar>
    </>
  );
};

const SideMenu = () => (
  <Sidebar>
    <StoreTitle><StoreIcon />MY STORE(2)</StoreTitle>
    <AddStore><PlusIcon />ADD NEW STORE</AddStore>
    <MenuClip>
      <MenuList>
        {menu.map((name) => (
          <li key={name}>
            <MenuLink href={"#/" + name.toLowerCase().replace(/ /g, "-")} $active={name === "Reports"}>
              <MenuIcon name={name} />
              {name}
            </MenuLink>
          </li>
        ))}
      </MenuList>
    </MenuClip>
    <SideThumb />
    <CollapseButton aria-label="Collapse menu"><ChevronLeft size={17} /></CollapseButton>
  </Sidebar>
);

const SalesTable = () => (
  <TableArea>
    <TableClip>
      <Table>
        <colgroup>
          {columns.map((w, i) => <col key={i} style={{ width: w }} />)}
        </colgroup>
        <thead>
          <HeadRow>
            <HeadCell rowSpan={3} $tone="navy"><Check $head type="checkbox" aria-label="Select all" /></HeadCell>
            <HeadCell rowSpan={3} $tone="navy" $size={16}>Date</HeadCell>
            <HeadCell colSpan={2} $tone="green">Taxable</HeadCell>
            <HeadCell rowSpan={3} $tone="green">Taxable<br />Subtotal</HeadCell>
            <HeadCell rowSpan={2} $tone="red">Non-Taxable</HeadCell>
            <HeadCell rowSpan={3} $tone="red">Non-Taxable<br />Subtotal</HeadCell>
            <HeadCell rowSpan={3} $tone="navy">Inside Sale</HeadCell>
            <HeadCell rowSpan={2} $tone="gold" />
          </HeadRow>
          <HeadRow>
            <HeadCell colSpan={2} $tone="green" $top $size={19}>MO LOW : 6.725</HeadCell>
          </HeadRow>
          <HeadRow $last>
            <HeadCell $tone="green" $top>Junk</HeadCell>
            <HeadCell $tone="green" $top>Total</HeadCell>
            <HeadCell $tone="red" $top>Party</HeadCell>
            <HeadCell $tone="gold" $top />
          </HeadRow>
        </thead>
        <tbody>
          {[...rows, { date: "", tax: "", non: "" }].map((r, i) => (
            <BodyRow key={i}>
              <Cell $bg="#fff">{r.date && <Check type="checkbox" aria-label={"Select " + r.date} />}</Cell>
              <Cell $bg="#fff" $soft>{r.date}</Cell>
              <Cell $bg={green} $money>{r.tax}</Cell>
              <Cell $bg={green} $money>{r.tax}</Cell>
              <Cell $bg={green} $money $soft>{r.tax}</Cell>
              <Cell $bg={pink} $money $soft>{r.non}</Cell>
              <Cell $bg={pink} $money $soft>{r.non}</Cell>
              <Cell $bg="#fcfcfc" $money $soft>{r.non}</Cell>
              <Cell $bg="#e8e5d3" />
            </BodyRow>
          ))}
        </tbody>
      </Table>
    </TableClip>
    <TableThumb />
  </TableArea>
);

const Report = () => {
  const [from, setFrom] = useState("05/01/25");
  const [to, setTo] = useState("05/07/25");
  return (
    <Panel>
      <Banner>
        <BackButton aria-label="Back to dashboard"><ChevronLeft size={17} /></BackButton>
        <BannerTitle>Monthly sales report</BannerTitle>
      </Banner>
      <Section>
        <TabsRow>
          <ReportTab $active>Sales</ReportTab>
          <TabDivider />
          <ReportTab>Manage Category</ReportTab>
          <ImportButton>Import from POS<ImportIcon /></ImportButton>
          <MoreButton aria-label="More options">
            <svg width="20" height="8" viewBox="0 0 20 8" fill="none" stroke="#333" strokeWidth="1.5"><circle cx="3" cy="4" r="2" /><circle cx="10" cy="4" r="2" /><circle cx="17" cy="4" r="2" /></svg>
          </MoreButton>
        </TabsRow>
        <Filters onSubmit={(e) => e.preventDefault()}>
          <RangeLabel htmlFor="from">Date Range</RangeLabel>
          <RangeBox>
            <DateInput id="from" value={from} onChange={(e) => setFrom(e.target.value)} />
            <Dash>-</Dash>
            <DateInput aria-label="End date" value={to} onChange={(e) => setTo(e.target.value)} />
            <CalendarButton type="button" aria-label="Open calendar"><CalendarIcon /></CalendarButton>
          </RangeBox>
          <FormButton $primary>Apply</FormButton>
          <FormButton type="button">Reset</FormButton>
        </Filters>
        <SalesTable />
      </Section>
    </Panel>
  );
};

const SystemTaskbar = () => (
  <Taskbar>
    <StartButton aria-label="Start">
      <svg width="20" height="20" viewBox="0 0 20 20" fill="#fff"><path d="M0 3l8.500-1.200v7.700H0zM9.500 1.600L20 0v9.500H9.500zM0 10.500h8.500v7.700L0 17zM9.500 10.500H20V20L9.500 18.400z" /></svg>
    </StartButton>
    <SearchBox>
      <Line size={21} w={1.5}><circle cx="12.500" cy="7.500" r="6" /><path d="M8 12l-7 7" /></Line>
      <SearchInput aria-label="Search" placeholder="Type here to search" />
      <SparkIcon />
    </SearchBox>
    <TaskButton aria-label="Task view">
      <svg width="22" height="20" viewBox="0 0 22 20" fill="none" stroke="#fff" strokeWidth="1.2"><path d="M1 0v3h12V0M1 20v-3h12v3M1 5.500h12v9H1zM18.500 0v20" /><path d="M17 7h3" strokeWidth="3" /></svg>
    </TaskButton>
    <AppList>
      {apps.map((a) => (
        <AppButton key={a.name} aria-label={a.name} $open={a.open} $current={a.current}>{a.icon}</AppButton>
      ))}
    </AppList>
    <Tray>
      <Weather><WeatherIcon />29°C</Weather>
      <TrayIcons>
        <Line size={16} box={16} w={1.5}><path d="M1 11l7-7 7 7" /></Line>
        <Line size={26} box={26} w={1.2}><rect x="7" y="8" width="9" height="10" rx="2" /><path d="M16 12l4-3v8l-4-3M9 4.500q4-2 8 0M9 21.500q4 2 8 0" /></Line>
        <svg width="21" height="15" viewBox="0 0 21 15"><path d="M5 14a4.500 4.500 0 0 1-.5-9A6 6 0 0 1 15.500 5 4.700 4.700 0 0 1 16 14z" fill="#1f8be0" /><path d="M4 6q4-2 8 2l7 4q-1 2-3 2H5q-3 0-4-2z" fill="#3aa7ee" /></svg>
        <Line size={19} box={19} w={1.3}><path d="M1 17A16 16 0 0 1 17 2M5 17.500A12 12 0 0 1 17 6.500M9 17.500a8 8 0 0 1 8-7" /><circle cx="15.500" cy="16" r="1.500" fill="currentColor" /></Line>
        <svg width="21" height="16" viewBox="0 0 21 16" fill="none" stroke="#fff" strokeWidth="1.2"><rect x="6" y="4" width="13" height="10" fill="#fff" /><path d="M20.500 7v4M1 3h5v3q-2.500 3-5 0zM2 0v3M5 0v3M3.500 8v6H6" /></svg>
        <Line size={20} box={20} w={1.3}><path d="M1 7.500h3L8.500 3v14L4 12.500H1zM11.500 7.500q2 2.500 0 5M14 5q4 5 0 10M16.500 3q6 7 0 14" /></Line>
      </TrayIcons>
      <Stack $w={28}>ENG<br />US</Stack>
      <Stack $w={62}>1:28 PM<br />5/8/2025</Stack>
      <Notice aria-label="Notifications"><NoticeIcon /></Notice>
    </Tray>
  </Taskbar>
);

export default function App() {
  return (
    <Screen>
      <GlobalStyle />
      <BrowserChrome />
      <Viewport>
        <Page>
          <Header>
            <BrandBlock>
              <BurgerButton aria-label="Toggle menu">
                <svg width="17" height="15" viewBox="0 0 17 15" fill="currentColor"><path d="M0 0h17v3H0zM0 4h17v3H0zM0 8h17v3H0zM0 12h17v3H0z" /></svg>
              </BurgerButton>
              Kwik and Stacys
            </BrandBlock>
            <TimeButton><FaRegClock size={14} />12:30 PM<Caret /></TimeButton>
            <Address><FaMapMarkerAlt size={15} />Kwik Run-120 E Simon Blvd, Holts Summit, MO 65043</Address>
            <UserBlock><Avatar><UserIcon /></Avatar>Dhana M</UserBlock>
            <HeaderAction aria-label="Downloads"><DownloadIcon /></HeaderAction>
            <HeaderAction aria-label="Settings"><FaCog size={15} /></HeaderAction>
            <HeaderAction aria-label="Help"><FaQuestionCircle size={15} /></HeaderAction>
            <HeaderAction aria-label="Sign out"><FaPowerOff size={15} /></HeaderAction>
          </Header>
          <Body>
            <SideMenu />
            <Report />
          </Body>
          <Footer><span>CSympl © 2025.</span><span>Powered by Object Source Inc</span></Footer>
        </Page>
        <ScrollTrack><ScrollThumb /></ScrollTrack>
      </Viewport>
      <SystemTaskbar />
    </Screen>
  );
}
